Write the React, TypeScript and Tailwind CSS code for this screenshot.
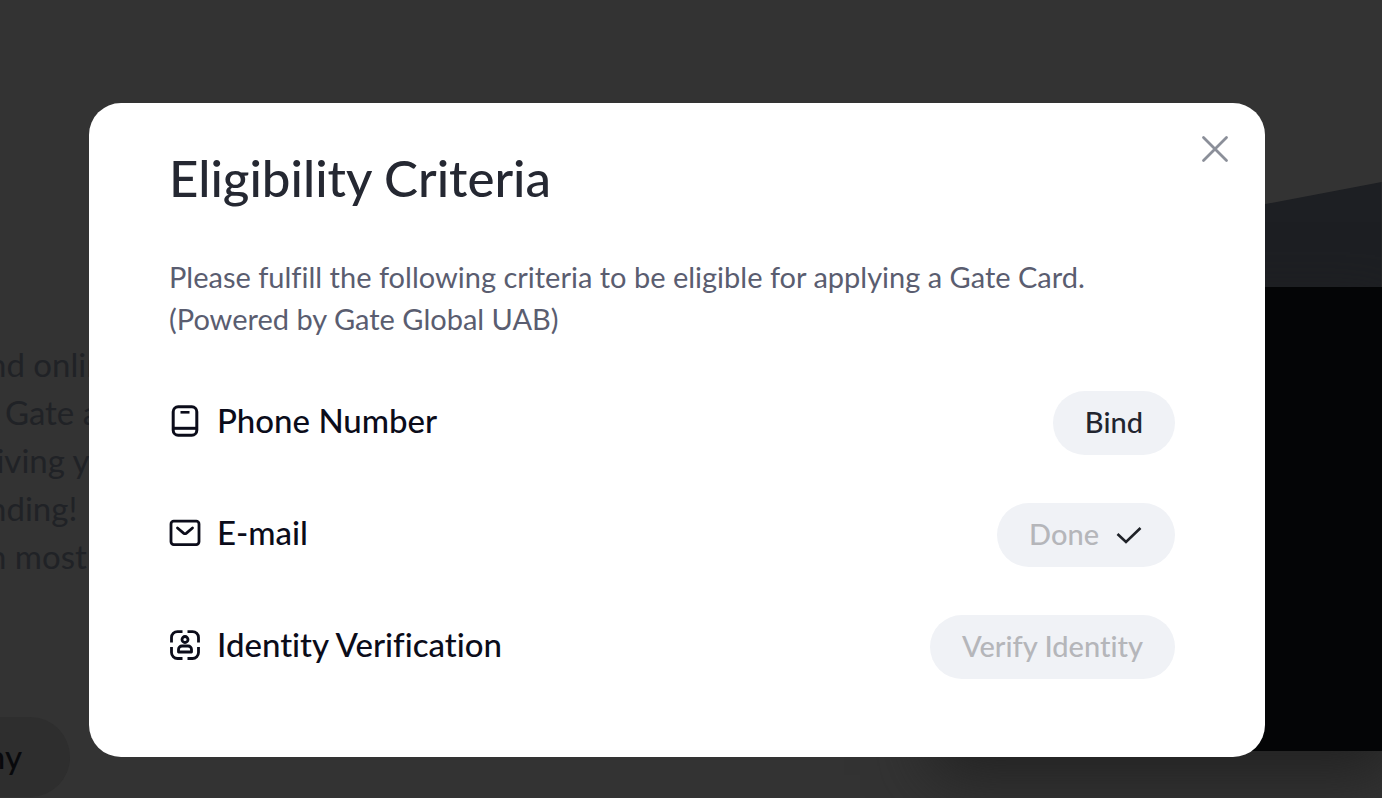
import React from 'react';

const intro = ['nd online', '  Gate and', ' iving you', 'nding!', 'n most of'];

function PhoneIcon() {
  return (
    <svg width="32" height="32" viewBox="0 0 32 32" fill="none" stroke="currentColor" strokeWidth="3" aria-hidden="true">
      <rect x="4.2" y="1.8" width="23.6" height="28.4" rx="5" />
      <path d="M4 23.3h24" />
      <path d="M11.5 7.300h9" strokeWidth="2.6" />
    </svg>
  );
}

function MailIcon() {
  return (
    <svg width="32" height="32" viewBox="0 0 32 32" fill="none" stroke="currentColor" strokeWidth="2.8" aria-hidden="true">
      <rect x="2" y="4.2" width="28" height="23.400" rx="2.8" />
      <path d="M8.500 11l6 5.100q1.500 1.100 3 0l6-5.100" strokeLinecap="round" />
    </svg>
  );
}

function IdentityIcon() {
  return (
    <svg width="32" height="32" viewBox="0 0 32 32" fill="none" stroke="currentColor" strokeWidth="2.8" aria-hidden="true">
      <path d="M13.500 2.600H8.500a6 6 0 0 0-6 6V13.500M18.500 2.600h5a6 6 0 0 1 6 6V13.500M2.500 18v5.500a6 6 0 0 0 6 6h5M29.500 18v5.500a6 6 0 0 1-6 6h-5" />
      <circle cx="16" cy="10.500" r="3" />
      <path d="M13 17h6a3.500 3.500 0 0 1 3.500 3.500v2.500h-13v-2.500a3.500 3.500 0 0 1 3.500-3.500z" strokeLinejoin="round" />
    </svg>
  );
}

function CheckIcon() {
  return (
    <svg width="28" height="28" viewBox="0 0 28 28" fill="none" stroke="#1f2228" strokeWidth="2.6" aria-hidden="true">
      <path d="M2.500 13l8.500 8L25.500 7" />
    </svg>
  );
}

function CriteriaRow({ icon, label, children }: { icon: React.ReactNode; label: string; children: React.ReactNode }) {
  return (
    <li className="flex h-16 items-center justify-between text-[#0b0c1a]">
      <div className="flex items-center gap-4 pb-1">
        {icon}
        <span className="pb-0.5 text-[33px] font-medium leading-10">{label}</span>
      </div>
      {children}
    </li>
  );
}

const pill = 'flex h-16 items-center rounded-full bg-[#f0f2f6] px-8 text-[29px] font-medium';

export default function App() {
  return (
    <div className="relative min-h-screen overflow-hidden bg-[#333333] font-['Lato',sans-serif] [font-variant-ligatures:none]">
      {/* Page behind the dialog */}
      <div className="flex h-screen justify-between">
        <div className="flex w-1/4 flex-col items-start pt-[340px]">
          <p className="-ml-3 whitespace-pre text-[33px] leading-12 text-[#202226]">
            {intro.map((line) => (
              <span key={line} className="block">{line}</span>
            ))}
          </p>
          <button type="button" className="-ml-32 mt-[137px] h-20 w-[198px] shrink-0 rounded-full bg-[#2e2e2e] pr-12 text-right text-[33px] font-medium text-[#08090c]">
            Apply any
          </button>
        </div>
        <div className="flex w-1/3 flex-col">
          <svg className="h-[287px] w-full" viewBox="0 0 460 287" preserveAspectRatio="none" aria-hidden="true">
            <path d="M0 270L344 204L460 182V287H0z" fill="#1d1f23" />
          </svg>
          <div className="h-[464px] bg-[#040506] shadow-[12px_24px_60px_#222222]" />
        </div>
      </div>

      <div className="absolute inset-0 pl-[89px] pr-[117px] pt-[103px]">
        <div role="dialog" aria-labelledby="criteria-title" className="relative rounded-[32px] bg-white pb-[78px] pl-20 pr-[90px] pt-[43px]">
          <button type="button" aria-label="Close" className="absolute right-8 top-7 p-1 text-[#8b8f99]">
            <svg width="28" height="28" viewBox="0 0 28 28" fill="none" stroke="currentColor" strokeWidth="2.8" strokeLinecap="round" aria-hidden="true">
              <path d="M2.500 2.500l23 23M25.500 2.500l-23 23" />
            </svg>
          </button>

          <h1 id="criteria-title" className="text-[51px] font-medium leading-16 text-[#252832]">
            Eligibility Criteria
          </h1>
          <p className="mt-[46px] text-[29px] leading-[42px] text-[#5a5d70]">
            Please fulfill the following criteria to be eligible for applying a Gate Card.
            <br />
            (Powered by Gate Global UAB)
          </p>

          <ul className="mt-[51px] flex flex-col gap-12">
            <CriteriaRow icon={<PhoneIcon />} label="Phone Number">
              <button type="button" className={`${pill} pb-0.5 text-[#22252f]`}>Bind</button>
            </CriteriaRow>
            <CriteriaRow icon={<MailIcon />} label="E-mail">
              <button type="button" disabled className={`${pill} gap-4 text-[#b5b6ba]`}>
                <span className="pb-0.5">Done</span>
                <CheckIcon />
              </button>
            </CriteriaRow>
            <CriteriaRow icon={<IdentityIcon />} label="Identity Verification">
              <button type="button" disabled className={`${pill} pb-0.5 text-[#b5b6ba]`}>Verify Identity</button>
            </CriteriaRow>
          </ul>
        </div>
      </div>
    </div>
  );
}
